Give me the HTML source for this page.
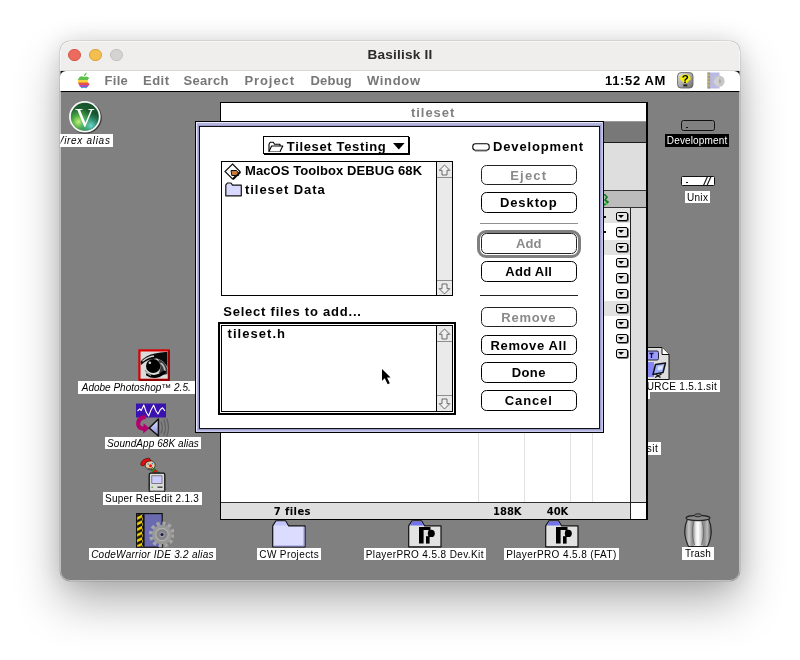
<!DOCTYPE html>
<html lang="en">
<head>
<meta charset="utf-8">
<title>Basilisk II</title>
<style>
html,body{margin:0;padding:0;}
body{width:800px;height:660px;overflow:hidden;background:#fff;position:relative;font-family:"Liberation Sans",sans-serif;}
#win{position:absolute;left:60px;top:41px;width:680px;height:539.5px;border-radius:10px;overflow:hidden;background:#808080;
 box-shadow:0 0 0 0.5px rgba(0,0,0,.16),0 22px 46px rgba(0,0,0,.30),0 0 22px rgba(0,0,0,.12);}
#pg{position:absolute;left:-60px;top:-41px;width:800px;height:660px;will-change:transform;}
#pg div,#pg svg{position:absolute;box-sizing:border-box;}
.t{white-space:pre;font-weight:bold;font-size:13px;line-height:15px;color:#000;}
.m{white-space:pre;font-weight:bold;font-size:13px;line-height:15px;color:#777;top:72.8px;}
.lbl{background:#fff;color:#000;font-size:10px;line-height:13.6px;height:12.4px;white-space:pre;text-align:center;overflow:hidden;}
.lbl.i{font-style:italic;}
.btn{border:1.1px solid #000;border-radius:5.5px;background:#fff;text-align:center;font-weight:bold;font-size:13px;line-height:19px;white-space:pre;left:480.5px;width:96.5px;height:20.5px;}
.btn.d{color:#8a8a8a;border-color:#222;}
.pop{left:616px;width:11.6px;height:9.2px;border:1.1px solid #000;border-radius:2px;background:#e8e8e8;box-shadow:0.8px 0.8px 0 #555;}
.pop:after{content:"";position:absolute;left:1.3px;top:2px;border-left:3.4px solid transparent;border-right:3.4px solid transparent;border-top:3.4px solid #000;}
.vl{width:1px;background:#e2e2e2;top:208px;height:295px;}
</style>
</head>
<body>
<div id="win"><div id="pg">

<!-- ===== host window chrome ===== -->
<div style="left:60px;top:41px;width:680px;height:30px;background:#efeeed;"></div>
<div style="left:60px;top:70px;width:680px;height:1px;background:#d9d8d7;"></div>
<div style="left:67.9px;top:48.6px;width:12.8px;height:12.8px;border-radius:50%;background:#ec6a5e;border:0.5px solid #d5574a;"></div>
<div style="left:89.1px;top:48.6px;width:12.8px;height:12.8px;border-radius:50%;background:#f5bf4f;border:0.5px solid #d9a23a;"></div>
<div style="left:110.4px;top:48.6px;width:12.8px;height:12.8px;border-radius:50%;background:#d4d3d2;border:0.5px solid #c3c2c1;"></div>
<div style="left:300px;top:46.5px;width:200px;text-align:center;font-size:13.6px;line-height:16px;font-weight:bold;color:#2b2b2b;letter-spacing:0.2px;white-space:pre;">Basilisk II</div>

<!-- ===== menu bar ===== -->
<div style="left:60px;top:70.8px;width:680px;height:20px;background:#fff;"></div>
<div style="left:60px;top:90.5px;width:680px;height:1.4px;background:#000;"></div>
<svg style="left:60px;top:70.8px" width="7" height="7" viewBox="0 0 7 7"><path d="M0 0H6A6 6 0 0 0 0 6Z" fill="#111"/></svg>
<svg style="left:733px;top:70.8px" width="7" height="7" viewBox="0 0 7 7"><path d="M7 0H1A6 6 0 0 1 7 6Z" fill="#111"/></svg>
<div class="m" style="left:104.5px;letter-spacing:0.3px;">File</div>
<div class="m" style="left:143px;letter-spacing:0.48px;">Edit</div>
<div class="m" style="left:183.5px;letter-spacing:0.3px;">Search</div>
<div class="m" style="left:244.5px;letter-spacing:0.9px;">Project</div>
<div class="m" style="left:310.5px;letter-spacing:0.2px;">Debug</div>
<div class="m" style="left:367px;letter-spacing:0.66px;">Window</div>
<div class="m" style="left:605px;letter-spacing:0.65px;color:#000;">11:52 AM</div>



<!-- ===== desktop icons ===== -->
<!-- Virex -->
<svg style="left:68px;top:99.5px" width="35" height="35" viewBox="0 0 35 35">
 <defs><radialGradient id="vg" cx="28%" cy="68%" r="80%"><stop offset="0" stop-color="#c4f47a"/><stop offset="0.3" stop-color="#4aa844"/><stop offset="0.62" stop-color="#1c5e30"/><stop offset="1" stop-color="#14502c"/></radialGradient>
 <radialGradient id="vg2" cx="72%" cy="82%" r="45%"><stop offset="0" stop-color="#6fe0d0" stop-opacity=".95"/><stop offset="1" stop-color="#2aa0a0" stop-opacity="0"/></radialGradient></defs>
 <circle cx="17.6" cy="17.600" r="16.200" fill="#3c3c3c"/>
 <circle cx="16.8" cy="16.8" r="15.8" fill="#f6f6f6"/>
 <circle cx="16.8" cy="16.8" r="14" fill="url(#vg)"/>
 <circle cx="16.8" cy="16.8" r="14" fill="url(#vg2)"/>
 <text x="16.8" y="27" text-anchor="middle" font-family="Liberation Serif, serif" font-size="27" fill="#fff">V</text>
</svg>
<div class="lbl i" style="left:54px;top:134.3px;width:58.6px;text-align:right;padding-right:2px;letter-spacing:0.7px;">Virex alias</div>

<!-- Photoshop -->
<svg style="left:138px;top:348.8px" width="32" height="32" viewBox="0 0 32 32">
 <rect x="1.4" y="1.4" width="29.4" height="29.4" fill="#dcdcdc" stroke="#d80000" stroke-width="2.2"/>
 <path d="M31 1.6V31H1.6" stroke="#7e0000" stroke-width="1.4" fill="none"/>
 <path d="M2.6 12.5Q8 6 17 4.5Q24 2.6 29.4 3V19Q27 12 19 9.6Q10 9.5 3 16Z" fill="#0a0a0a"/>
 <path d="M4.5 12.2Q10 7.6 16 7" stroke="#cfcfcf" stroke-width="1.3" fill="none"/>
 <ellipse cx="15.2" cy="17" rx="7.2" ry="7" fill="#000"/>
 <path d="M20 10Q27 12 29.400 20V25Q25 27 21 24Q24 18 20 10Z" fill="#3a3a3a"/>
 <path d="M22.5 14Q27 17 27 23" stroke="#bdbdbd" stroke-width="1.6" fill="none"/>
 <circle cx="11.8" cy="13.8" r="1.3" fill="#cfcfcf"/>
 <path d="M9.5 25.5Q17.500 30.5 26.5 23" stroke="#000" stroke-width="3" fill="none" stroke-linecap="round"/>
 <path d="M7 21Q9 25 13 26.400" stroke="#9a9a9a" stroke-width="1.2" fill="none"/>
</svg>
<div class="lbl i" style="left:78px;top:381.3px;width:116.5px;letter-spacing:0px;">Adobe Photoshop™ 2.5.</div>

<!-- SoundApp -->
<svg style="left:135px;top:403px" width="37" height="35" viewBox="0 0 37 35">
 <defs><linearGradient id="sp" x1="0" y1="0" x2="0" y2="1"><stop offset="0" stop-color="#e4e4ff"/><stop offset="1" stop-color="#8c8ce0"/></linearGradient></defs>
 <rect x="1" y="0.5" width="30" height="14" fill="#3a12b0"/>
 <path d="M2.500 8L4.800 5.800L6.200 7.600L8.800 2L11.200 9L13.600 13L16 7L18.600 2.200L21 8L23 11L25.400 6.500L27.600 4.800L30 8" stroke="#fff" stroke-width="1.100" fill="none" stroke-linejoin="round"/>
 <path d="M10.500 13.800Q2.800 14.800 3.200 21.500Q4 26 9.500 25.600" stroke="#b2006e" stroke-width="4.200" fill="none"/>
 <path d="M8.600 20.200L14.400 25.200L8.200 30.600Z" fill="#b2006e"/>
 <path d="M14.200 25L23.400 16V33Z" fill="url(#sp)" stroke="#111" stroke-width="1.500" stroke-linejoin="round"/>
 <path d="M26 18.500Q28.400 24.500 26 30.500M28.800 16.500Q32 24.500 28.800 32.500M31.600 15.500Q35.400 24.500 31.600 33.500" stroke="#5e5e5e" stroke-width="1.200" fill="none"/>
</svg>
<div class="lbl i" style="left:105px;top:436.7px;width:96px;letter-spacing:0.07px;">SoundApp 68K alias</div>

<!-- Super ResEdit -->
<svg style="left:139px;top:456.5px" width="28" height="36" viewBox="0 0 28 36">
 <path d="M13 12L20 18" stroke="#1a8a2a" stroke-width="4.6"/><path d="M15 13.8L17 15.6" stroke="#d01818" stroke-width="4.6"/><path d="M18.5 16.5L20.5 18.5" stroke="#2040c0" stroke-width="4.6"/>
 <ellipse cx="11.2" cy="8.2" rx="5" ry="4.6" fill="#f0c8a0" stroke="#222" stroke-width="0.8"/>
 <path d="M1.5 7.5Q3 1 10.5 1.2L12 4Q6.5 3.8 5.2 8.2Q3 10 1.5 7.5Z" fill="#e01010" stroke="#400" stroke-width="0.6"/>
 <circle cx="11.5" cy="8.8" r="1.5" fill="#f01010"/>
 <circle cx="9.2" cy="7" r="0.8" fill="#2090d0"/><circle cx="13.4" cy="6.6" r="0.8" fill="#2090d0"/>
 <path d="M8.5 11Q11 13 14 10.5" stroke="#222" stroke-width="0.8" fill="none"/>
 <rect x="10.2" y="16.2" width="15.6" height="18.6" rx="1.6" fill="#dcdcdc" stroke="#111" stroke-width="1.3"/>
 <rect x="12.8" y="18.8" width="10.2" height="7.6" fill="#ccccff" stroke="#666" stroke-width="0.8"/>
 <rect x="18.5" y="29.5" width="5" height="1.4" fill="#444"/><rect x="12.5" y="29.6" width="1.4" height="1.4" fill="#4a2"/>
 <path d="M10.5 33.8H25.5" stroke="#888" stroke-width="1"/>
</svg>
<div class="lbl" style="left:102.5px;top:492.3px;width:99px;letter-spacing:0.24px;">Super ResEdit 2.1.3</div>

<!-- CodeWarrior -->
<svg style="left:135.5px;top:512.5px" width="38" height="35" viewBox="0 0 38 35">
 <defs><pattern id="hz" width="6" height="5.6" patternUnits="userSpaceOnUse"><rect width="6" height="5.6" fill="#111"/><path d="M-1 5.2L7 1.2V4L-1 8ZM-1 -0.4L7 -4.4V-1.6L-1 2.4Z" fill="#f4d000"/></pattern></defs>
 <rect x="0.6" y="0.6" width="25.6" height="33.6" fill="#6a6ab0" stroke="#111" stroke-width="1.2"/>
 <rect x="1.2" y="1.2" width="5.6" height="32.4" fill="url(#hz)"/>
 <rect x="6.8" y="1.2" width="1.8" height="32.4" fill="#111"/>
 <g transform="translate(26 21.5)">
  <circle r="11.2" fill="none" stroke="#a6a6a6" stroke-width="3.8" stroke-dasharray="3.2 2.664"/>
  <circle r="9.8" fill="#989898"/>
  <circle r="6.2" fill="#868686" stroke="#b2b2b2" stroke-width="1.2"/>
  <circle r="2.6" fill="#9c9cb4"/>
  <circle r="1.5" fill="#1a1a3a"/>
 </g>
</svg>
<div class="lbl i" style="left:88.8px;top:547.7px;width:127.4px;letter-spacing:0.27px;">CodeWarrior IDE 3.2 alias</div>

<!-- CW Projects -->
<svg style="left:272px;top:520px" width="34" height="28" viewBox="0 0 34 28">
 <path d="M0.7 5.8V26.8H33V5.8H16.5L13.5 0.8H4Z" fill="#dcdcff" stroke="#111" stroke-width="1.2" stroke-linejoin="round"/>
 <path d="M4.3 1.4H13.2L15.6 5.4H2Z" fill="#c4c4ff"/>
 <path d="M32 7V26H1.5" stroke="#9a9ad8" stroke-width="1.2" fill="none"/>
</svg>
<div class="lbl" style="left:257.3px;top:547.5px;width:63.8px;letter-spacing:0.39px;">CW Projects</div>

<svg style="left:408px;top:520px" width="34" height="28" viewBox="0 0 34 28">
 <path d="M0.7 5.8V26.8H33V5.8H16.5L13.5 0.8H4Z" fill="#e2e2e2" stroke="#111" stroke-width="1.2" stroke-linejoin="round"/>
 <path d="M4.3 1.4H13.2L15.6 5.4H2Z" fill="#7272ee"/>
 <path d="M11 7H22.5V10H15.6V23.6H11Z" fill="#000"/><rect x="18" y="16.2" width="3.6" height="7.4" fill="#000"/>
 <ellipse cx="23.3" cy="13.4" rx="3.5" ry="3.6" fill="#000"/><rect x="20.6" y="9.8" width="2.6" height="7.2" fill="#000"/>
</svg>
<div class="lbl" style="left:363.8px;top:547.5px;width:122px;letter-spacing:0.38px;">PlayerPRO 4.5.8 Dev.Kit</div>
<svg style="left:544.5px;top:520px" width="34" height="28" viewBox="0 0 34 28">
 <path d="M0.7 5.8V26.8H33V5.8H16.5L13.5 0.8H4Z" fill="#e2e2e2" stroke="#111" stroke-width="1.2" stroke-linejoin="round"/>
 <path d="M4.3 1.4H13.2L15.6 5.4H2Z" fill="#7272ee"/>
 <path d="M11 7H22.5V10H15.6V23.6H11Z" fill="#000"/><rect x="18" y="16.2" width="3.6" height="7.4" fill="#000"/>
 <ellipse cx="23.3" cy="13.4" rx="3.5" ry="3.6" fill="#000"/><rect x="20.6" y="9.8" width="2.6" height="7.2" fill="#000"/>
</svg>
<div class="lbl" style="left:504px;top:547.5px;width:114.8px;letter-spacing:0.4px;">PlayerPRO 4.5.8 (FAT)</div>

<!-- Trash -->
<svg style="left:683px;top:512.5px" width="30" height="35" viewBox="0 0 30 35">
 <defs><linearGradient id="tg" x1="0" x2="1"><stop offset="0" stop-color="#777"/><stop offset="0.16" stop-color="#c8c8c8"/><stop offset="0.3" stop-color="#8a8a8a"/><stop offset="0.42" stop-color="#e8e8e8"/><stop offset="0.5" stop-color="#fff"/><stop offset="0.6" stop-color="#d8d8d8"/><stop offset="0.72" stop-color="#888"/><stop offset="0.85" stop-color="#bbb"/><stop offset="1" stop-color="#5a5a5a"/></linearGradient></defs>
 <path d="M4.5 6Q-1.5 19 5.5 33.5H24.5Q31.5 19 25.5 6Z" fill="url(#tg)" stroke="#222" stroke-width="1.1"/>
 <path d="M11 8Q7.5 20 11.5 32M19 8Q22.5 20 18.500 32" stroke="#6a6a6a" stroke-width="0.9" fill="none"/>
 <ellipse cx="15" cy="5" rx="12" ry="2.6" fill="#8a8a8a" stroke="#222" stroke-width="1.1"/>
 <ellipse cx="15" cy="2.3" rx="3.6" ry="1.5" fill="#777" stroke="#222" stroke-width="0.9"/>
</svg>
<div class="lbl" style="left:682.3px;top:547.3px;width:31.4px;letter-spacing:0.2px;">Trash</div>

<!-- Development volume -->
<div style="left:681px;top:120.3px;width:34px;height:10.3px;border:1.1px solid #111;border-radius:2.6px;background:#808080;"></div>
<div style="left:686px;top:126.6px;width:2.2px;height:1.2px;background:#111;"></div>
<div class="lbl" style="left:665px;top:134.4px;width:64.2px;background:#000;color:#fff;letter-spacing:0.15px;">Development</div>
<!-- Unix volume -->
<div style="left:681px;top:176px;width:34px;height:10px;border:1.1px solid #111;border-radius:1.5px;background:#fff;"></div>
<div style="left:686px;top:182px;width:2.2px;height:1.2px;background:#111;"></div>
<svg style="left:702px;top:176px" width="12" height="10" viewBox="0 0 12 10"><path d="M1.5 9.5L5.5 0.5M5 9.5L9 0.5" stroke="#111" stroke-width="1.1"/></svg>
<div class="lbl" style="left:685px;top:190.5px;width:25.2px;letter-spacing:0.33px;">Unix</div>

<!-- menu bar icons -->
<svg style="left:77px;top:71.6px" width="14" height="17" viewBox="0 0 14 17">
 <defs><linearGradient id="ap" x1="0" y1="0" x2="0" y2="1"><stop offset="0" stop-color="#5cc04a"/><stop offset="0.30" stop-color="#5cc04a"/><stop offset="0.30" stop-color="#f6d33c"/><stop offset="0.46" stop-color="#f6d33c"/><stop offset="0.46" stop-color="#f39a33"/><stop offset="0.60" stop-color="#f39a33"/><stop offset="0.60" stop-color="#e8504a"/><stop offset="0.74" stop-color="#e8504a"/><stop offset="0.74" stop-color="#a452b8"/><stop offset="0.87" stop-color="#a452b8"/><stop offset="0.87" stop-color="#4a9be0"/><stop offset="1" stop-color="#4a9be0"/></linearGradient></defs>
 <path d="M7 5Q4.5 3.6 2.4 5.2Q0.2 7.4 1.3 11.2Q2.4 14.8 4.4 16Q5.6 16.5 7 15.8Q8.4 16.5 9.6 16Q11.4 14.8 12.6 12Q10.6 11 10.7 8.8Q10.8 7 12.2 6.2Q10.4 3.8 7 5Z" fill="url(#ap)"/>
 <path d="M6.8 4.4Q6.8 1.8 9.6 0.6Q9.8 3.4 6.8 4.4Z" fill="#5cc04a"/>
</svg>
<svg style="left:676.5px;top:71.8px" width="17" height="17" viewBox="0 0 17 17">
 <defs><linearGradient id="hg" x1="0" y1="0" x2="1" y2="1"><stop offset="0" stop-color="#e8e8e8"/><stop offset="1" stop-color="#6c6c6c"/></linearGradient></defs>
 <rect x="0.6" y="0.6" width="15.4" height="15.4" rx="3.4" fill="url(#hg)" stroke="#555" stroke-width="0.8"/>
 <path d="M3.2 7.2Q2.2 2.6 8.3 2.2Q14.4 2.6 13.4 7.2L10 11H6.6Z" fill="#f2ee10"/>
 <text x="8.3" y="10.6" text-anchor="middle" font-family="Liberation Sans, sans-serif" font-weight="bold" font-size="11.5" fill="#000">?</text>
 <rect x="6.3" y="12.4" width="4" height="2" fill="#222"/>
</svg>
<svg style="left:707px;top:71.8px" width="18" height="17" viewBox="0 0 18 17">
 <rect x="0.5" y="0.5" width="12" height="16" fill="#b9b9e2"/>
 <rect x="0.5" y="0.5" width="2.6" height="16" fill="#9a9a86"/>
 <path d="M1.8 2.5V15" stroke="#e0d050" stroke-width="1.3" stroke-dasharray="1.4 2"/>
 <circle cx="12" cy="9.2" r="5.6" fill="#c6c6c6"/><circle cx="12" cy="9.2" r="2" fill="#aaa"/>
 <path d="M6 10L12 3.4V15Z" fill="#d4d4d8" opacity=".8"/>
</svg>

<!-- ===== sit file icons behind project window ===== -->
<svg style="left:637px;top:346.5px" width="33" height="33" viewBox="0 0 33 33">
 <path d="M0.5 0.5H25L32 7.5V32.5H0.5Z" fill="#dedede" stroke="#111" stroke-width="1"/>
 <path d="M25 0.5V7.5H32" fill="#fff" stroke="#111" stroke-width="1"/>
 <rect x="3" y="4" width="18.5" height="9" rx="1.5" fill="#9a9aff" stroke="#223" stroke-width="1"/>
 <path d="M12.500 6.500H16.500M14.500 6.500V11" stroke="#113" stroke-width="1.3"/>
 <rect x="3" y="15" width="14" height="15" fill="#8585f5"/>
 <path d="M18.500 17.500L28.500 16L26 25.500L16 27.500Z" fill="#9db0ff" stroke="#111" stroke-width="1.5" stroke-linejoin="round"/>
 <path d="M21 19.500L26 18.500L25 22.500L20.500 23.300Z" fill="#dfe6ff"/>
 <path d="M18 30.500L24.500 27M19 27.500L23.500 30.500" stroke="#111" stroke-width="1.3"/>
</svg>
<div class="lbl" style="left:619px;top:380px;width:100.5px;text-align:right;padding-right:2.5px;letter-spacing:0.3px;">URCE 1.5.1.sit</div>
<div class="lbl" style="left:640px;top:392px;width:10px;height:6.5px;"></div>
<div class="lbl" style="left:630px;top:441.5px;width:31px;height:13.2px;line-height:14px;text-align:right;padding-right:2.5px;letter-spacing:0.6px;">sit</div>

<!-- ===== project window "tileset" ===== -->
<div style="left:219.5px;top:102px;width:428px;height:417.5px;background:#000;"></div>
<div style="left:220.6px;top:103px;width:425px;height:18.5px;background:#fff;"></div>
<div class="t" style="left:411px;top:104.6px;color:#808080;letter-spacing:0.95px;">tileset</div>
<div style="left:220.6px;top:121px;width:425px;height:22.4px;background:#787878;border-top:1.5px solid #9a9a9a;border-bottom:1.4px solid #1a1a1a;"></div>
<div style="left:220.6px;top:143.4px;width:425px;height:47px;background:#dedede;"></div>
<div style="left:220.6px;top:190px;width:425px;height:18px;background:#bcbcbc;border-top:1.2px solid #333;border-bottom:1.2px solid #333;"></div>
<svg style="left:603px;top:194px" width="6" height="12" viewBox="0 0 6 12"><path d="M1 0L4 3L2 6L5 8L1 11" stroke="#0a7a1a" stroke-width="1.6" fill="none"/><path d="M2 9L5 10" stroke="#2fd84a" stroke-width="1.5"/></svg>
<div style="left:220.6px;top:208px;width:410px;height:295px;background:#fff;"></div>
<div style="left:220.6px;top:208px;width:410px;height:15.4px;background:#e2e2e2;"></div>
<div style="left:220.6px;top:239.6px;width:410px;height:15.2px;background:#e2e2e2;"></div>
<div style="left:220.6px;top:300.8px;width:410px;height:15.2px;background:#e2e2e2;"></div>
<div class="vl" style="left:477.5px;"></div>
<div class="vl" style="left:523.5px;"></div>
<div class="vl" style="left:570px;"></div>
<div class="vl" style="left:592px;"></div>
<div class="pop" style="top:211.9px;"></div>
<div class="pop" style="top:227.4px;"></div>
<div class="pop" style="top:242.7px;"></div>
<div class="pop" style="top:258.1px;"></div>
<div class="pop" style="top:273.4px;"></div>
<div class="pop" style="top:288.8px;"></div>
<div class="pop" style="top:303.8px;"></div>
<div class="pop" style="top:319.1px;"></div>
<div class="pop" style="top:333.9px;"></div>
<div class="pop" style="top:348.9px;"></div>
<div style="left:630px;top:208px;width:16px;height:311px;background:#dedede;border-left:1.2px solid #222;"></div>
<div style="left:220.6px;top:502.4px;width:410.5px;height:16.4px;background:#dedede;border-top:1.3px solid #333;"></div>
<div style="left:630px;top:502.4px;width:16px;height:16.4px;background:#fff;border-top:1.3px solid #222;border-left:1.2px solid #222;"></div>
<div class="t" style="left:273.8px;top:506px;font-family:'DejaVu Sans',sans-serif;font-size:10px;line-height:12px;letter-spacing:0.4px;">7 files</div>
<div class="t" style="left:493px;top:506px;font-family:'DejaVu Sans',sans-serif;font-size:10px;line-height:12px;letter-spacing:0px;">188K</div>
<div class="t" style="left:546.8px;top:506px;font-family:'DejaVu Sans',sans-serif;font-size:10px;line-height:12px;letter-spacing:-0.1px;">40K</div>


<div style="left:603.6px;top:215.6px;width:2.2px;height:2px;background:#111;"></div>
<div style="left:603.6px;top:231.2px;width:2.2px;height:2px;background:#111;"></div>
<!-- ===== Add Files dialog ===== -->
<div style="left:195px;top:121.3px;width:409px;height:311.7px;background:#000;"></div>
<div style="left:196.1px;top:122.4px;width:406.8px;height:309.5px;background:#c9c9ec;"></div>
<div style="left:196.1px;top:122.4px;width:405.8px;height:308.5px;background:#e8e8fa;"></div>
<div style="left:197.1px;top:123.4px;width:404.8px;height:307.5px;background:#b4b4e0;"></div>
<div style="left:198.2px;top:124.5px;width:402.6px;height:305.3px;background:#9a9acb;"></div>
<div style="left:199.2px;top:125.5px;width:400.6px;height:303.3px;background:#fff;border:1.1px solid #111;"></div>

<!-- popup -->
<div style="left:264.4px;top:137.4px;width:146px;height:17.6px;background:#000;"></div>
<div style="left:263.3px;top:136.3px;width:146px;height:17.6px;background:#fff;border:1.1px solid #000;"></div>
<svg style="left:268px;top:140.5px" width="16" height="12" viewBox="0 0 16 12"><path d="M1 3.3V10.5H12V3.3H6.5L5.3 1.3H2.2L1 3.3Z" fill="#fff" stroke="#000" stroke-width="1.1" stroke-linejoin="round"/><path d="M12 10.5L14.8 5H3.6L1 10.5" fill="#fff" stroke="#000" stroke-width="1.1" stroke-linejoin="round"/></svg>
<div class="t" style="left:286.8px;top:139px;letter-spacing:0.65px;">Tileset Testing</div>
<svg style="left:392.5px;top:143px" width="12" height="7" viewBox="0 0 12 7"><path d="M0 0H11.6L5.8 6.6Z" fill="#000"/></svg>

<!-- volume -->
<svg style="left:471.5px;top:142.5px" width="19" height="9" viewBox="0 0 19 9"><rect x="0.8" y="0.8" width="16.4" height="6.4" rx="2.6" fill="#fff" stroke="#000" stroke-width="1.1"/><path d="M3 8H15" stroke="#777" stroke-width="1"/></svg>
<div class="t" style="left:493px;top:139.2px;letter-spacing:0.85px;">Development</div>

<!-- file list -->
<div style="left:221px;top:161px;width:231.8px;height:135.2px;background:#fff;border:1.1px solid #000;"></div>
<div style="left:436px;top:161px;width:16.8px;height:135.2px;background:#eaeaea;border:1.1px solid #000;"></div>
<div style="left:437.1px;top:177px;width:14.6px;height:1.1px;background:#8e8e8e;"></div>
<div style="left:437.1px;top:279.6px;width:14.6px;height:1.1px;background:#8e8e8e;"></div>
<svg style="left:438px;top:163.5px" width="13" height="12" viewBox="0 0 13 12"><path d="M6.5 1L11.8 6.3H9V11H4V6.3H1.2Z" fill="#f0f0f0" stroke="#6a6a6a" stroke-width="1" stroke-linejoin="round"/></svg>
<svg style="left:438px;top:282.5px" width="13" height="12" viewBox="0 0 13 12"><path d="M6.5 11L11.8 5.7H9V1H4V5.7H1.2Z" fill="#f0f0f0" stroke="#6a6a6a" stroke-width="1" stroke-linejoin="round"/></svg>
<svg style="left:224px;top:162.5px" width="18" height="18" viewBox="0 0 18 18"><path d="M8.5 1L16 8.5L8.5 16L1 8.5Z" fill="#fff" stroke="#111" stroke-width="1.2"/><path d="M7 7.5H12.5L14.5 10V12.5H7.8Z" fill="#c87a3c" stroke="#111" stroke-width="1"/><path d="M9 16.4L16.4 9" stroke="#111" stroke-width="1.8"/></svg>
<div class="t" style="left:245px;top:163.3px;letter-spacing:0.08px;">MacOS Toolbox DEBUG 68K</div>
<svg style="left:224.5px;top:182.3px" width="18" height="15" viewBox="0 0 18 15"><path d="M0.8 3.2V13.8H16.3V3.2H7.5L6 1H2.3Z" fill="#d9d9ff" stroke="#111" stroke-width="1.2" stroke-linejoin="round"/></svg>
<div class="t" style="left:245px;top:182.1px;letter-spacing:0.95px;">tileset Data</div>

<div class="t" style="left:223.2px;top:304.4px;letter-spacing:0.78px;">Select files to add...</div>

<!-- add list -->
<div style="left:218px;top:321.8px;width:238px;height:93px;background:#fff;border:2.1px solid #000;"></div>
<div style="left:221.2px;top:325px;width:231.6px;height:86.6px;background:#fff;border:1.1px solid #000;"></div>
<div style="left:436px;top:325px;width:16.8px;height:86.6px;background:#eaeaea;border:1.1px solid #000;"></div>
<div style="left:437.1px;top:341px;width:14.6px;height:1.1px;background:#8e8e8e;"></div>
<div style="left:437.1px;top:394.6px;width:14.6px;height:1.1px;background:#8e8e8e;"></div>
<svg style="left:438px;top:327.5px" width="13" height="12" viewBox="0 0 13 12"><path d="M6.5 1L11.8 6.3H9V11H4V6.3H1.2Z" fill="#f0f0f0" stroke="#6a6a6a" stroke-width="1" stroke-linejoin="round"/></svg>
<svg style="left:438px;top:397.5px" width="13" height="12" viewBox="0 0 13 12"><path d="M6.5 11L11.8 5.7H9V1H4V5.7H1.2Z" fill="#f0f0f0" stroke="#6a6a6a" stroke-width="1" stroke-linejoin="round"/></svg>
<div class="t" style="left:227.5px;top:326.4px;letter-spacing:1.05px;">tileset.h</div>

<!-- buttons -->
<div class="btn d" style="top:164.5px;letter-spacing:1.2px;">Eject</div>
<div class="btn" style="top:192px;letter-spacing:0.9px;">Desktop</div>
<div style="left:480px;top:222.6px;width:97.5px;height:1.1px;background:#909090;"></div>
<div style="left:477px;top:229.6px;width:103.5px;height:28.4px;border:3.2px solid #808080;border-radius:9px;background:#fff;"></div>
<div class="btn d" style="top:233.4px;letter-spacing:0px;">Add</div>
<div class="btn" style="top:261.2px;letter-spacing:0.26px;">Add All</div>
<div style="left:480px;top:294.6px;width:97.5px;height:1.2px;background:#222;"></div>
<div class="btn d" style="top:306.8px;letter-spacing:0.7px;">Remove</div>
<div class="btn" style="top:334.5px;letter-spacing:0.6px;">Remove All</div>
<div class="btn" style="top:362.2px;letter-spacing:0.4px;">Done</div>
<div class="btn" style="top:390px;letter-spacing:0.9px;">Cancel</div>

<!-- cursor -->
<svg style="left:380px;top:367px" width="13" height="19" viewBox="0 0 13 19"><path d="M2 2V13.8L4.8 11.2L7.6 17.2L9.8 16.2L7 10.4H10.6Z" fill="#000"/></svg>

</div>
<div style="position:absolute;left:0;top:0;right:0;bottom:0;border-radius:10px;border:1px solid rgba(255,255,255,.5);"></div>
</div>
</body>
</html>
